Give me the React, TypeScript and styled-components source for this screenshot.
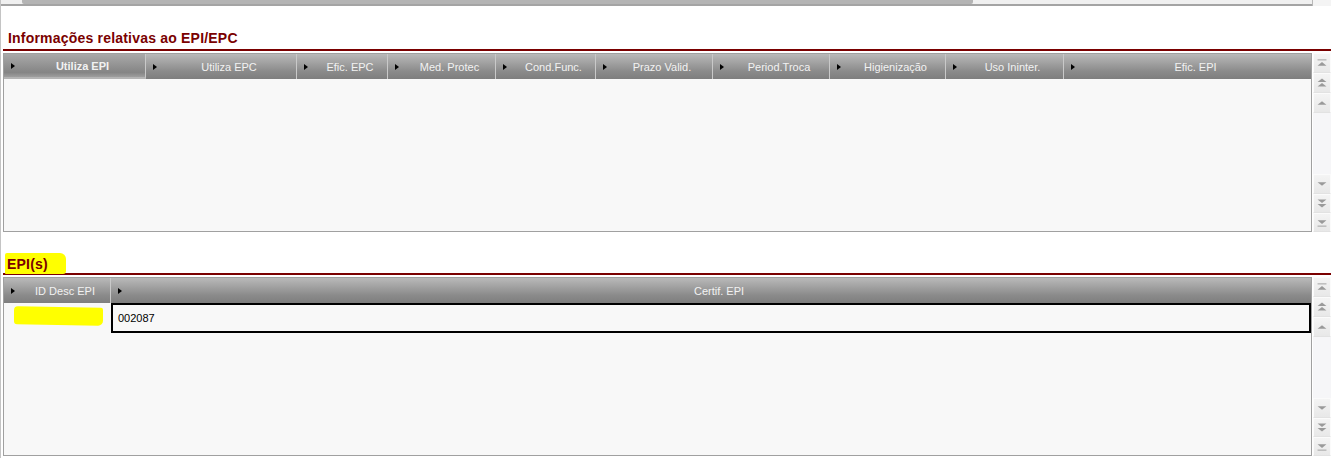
import React from 'react';
import styled, { createGlobalStyle } from 'styled-components';

const GlobalStyle = createGlobalStyle`
  html, body {
    margin: 0;
    padding: 0;
    background: #ffffff;
  }
  body {
    font-family: "Liberation Sans", Arial, sans-serif;
  }
`;

// Styled Components

const Page = styled.div`
  width: 1331px;
  height: 458px;
  box-sizing: border-box;
  border-left: 1px solid #c4c4c4;
  overflow: hidden;
`;

const TopScroll = styled.div`
  display: flex;
  height: 6px;
`;

const TopTrack = styled.div`
  flex: 1;
  display: flex;
  align-items: flex-start;
  background: #f0f0f0;
  border-bottom: 2px solid #a4a4a4;
  padding-left: 21px;
`;

const TopThumb = styled.div`
  width: 951px;
  height: 4px;
  background: #b4b4b4;
  border-radius: 0 0 2px 2px;
`;

const TopCorner = styled.div`
  width: 18px;
  border-left: 1px solid #b8b8b8;
  background: #f4f4f4;
`;

const Section = styled.section<{ $top: number }>`
  margin-top: ${(p) => p.$top}px;
  padding-left: 2px;
`;

const Title = styled.h2`
  margin: 0 0 0 5px;
  font-size: 14px;
  line-height: 16px;
  letter-spacing: 0.2px;
  font-weight: bold;
  color: #7a0000;
  display: flex;
`;

const Marker = styled.span`
  background: #ffff00;
  padding: 3px 18px 2px 2px;
  margin: -3px 0 -2px -3px;
  border-radius: 2px 6px 3px 1px;
`;

const Rule = styled.div<{ $gap: number }>`
  margin-top: ${(p) => p.$gap}px;
  height: 2px;
  background: #7a0000;
`;

const GridFrame = styled.div<{ $height: number; $gap: number }>`
  display: flex;
  margin-top: ${(p) => p.$gap}px;
  height: ${(p) => p.$height}px;
`;

const Table = styled.div`
  flex: 1;
  display: flex;
  flex-direction: column;
  border: 1px solid #a0a0a0;
  background: #f8f8f8;
`;

const HeaderRow = styled.div`
  display: flex;
  height: 25px;
  background: linear-gradient(#b9b9b9, #8a8a8a 70%, #7e7e7e);
`;

const HeaderCell = styled.div<{ $w?: number; $active?: boolean }>`
  ${(p) => (p.$w ? `width: ${p.$w}px;` : 'flex: 1;')}
  flex-shrink: 0;
  display: flex;
  align-items: center;
  box-sizing: border-box;
  border-right: 1px solid #c9c9c9;
  color: #f2f2f2;
  font-size: 11px;
  font-weight: ${(p) => (p.$active ? 'bold' : 'normal')};
  ${(p) =>
    p.$active
      ? 'background: linear-gradient(#a9a9a9, #858585 80%, #9e9e9e); border-bottom: 2px solid #b4b4b4;'
      : ''}

  &:last-child {
    border-right: none;
  }
`;

const Pointer = styled.span`
  width: 15px;
  flex-shrink: 0;
  display: flex;
  justify-content: center;
  padding-left: 1px;

  &::before {
    content: '';
    border-left: 4px solid #000;
    border-top: 3px solid transparent;
    border-bottom: 3px solid transparent;
  }
`;

const HeaderText = styled.span`
  flex: 1;
  text-align: center;
  white-space: nowrap;
`;

const Body = styled.div`
  flex: 1;
  display: flex;
  flex-direction: column;
`;

const DataRow = styled.div`
  display: flex;
  height: 30px;
`;

const IdCell = styled.div`
  width: 107px;
  box-sizing: border-box;
  padding: 4px 8px 6px 10px;
`;

const IdMarker = styled.div`
  height: 18px;
  background: #ffff00;
  border-radius: 4px 2px 5px 3px;
  transform: skewY(1deg);
`;

const EditCell = styled.div`
  flex: 1;
  border: 2px solid #000;
  display: flex;
  align-items: center;
  padding-left: 5px;
  font-size: 11px;
  color: #000;
`;

const VScroll = styled.div`
  width: 18px;
  margin-left: 1px;
  display: flex;
  flex-direction: column;
  background: #f6f6f6;
`;

const ScrollTrack = styled.div`
  flex: 1;
  background: #f6f6f8;
`;

const ScrollBtn = styled.div<{ $h: number }>`
  height: ${(p) => p.$h}px;
  display: flex;
  align-items: center;
  justify-content: center;
  box-sizing: border-box;
  border: 1px solid #fbfbfb;
  border-bottom-color: #e2e2e2;
  background: linear-gradient(#f4f4f4, #e8e8e8);
`;

type Arrow = 'first' | 'pageUp' | 'up' | 'down' | 'pageDown' | 'last';

function ArrowIcon({ kind }: { kind: Arrow }) {
  const c = '#9a9a9a';
  const up = (y: number) => `M4 ${y + 4} L9 ${y} L14 ${y + 4} Z`;
  const down = (y: number) => `M4 ${y} L9 ${y + 4} L14 ${y} Z`;
  return (
    <svg width="18" height="12" viewBox="0 0 18 12">
      {kind === 'first' && (
        <>
          <rect x="4" y="2" width="10" height="1" fill={c} />
          <path d={up(5)} fill={c} />
        </>
      )}
      {kind === 'pageUp' && (
        <>
          <path d={up(1)} fill={c} />
          <path d={up(6)} fill={c} />
        </>
      )}
      {kind === 'up' && <path d={up(4)} fill={c} />}
      {kind === 'down' && <path d={down(4)} fill={c} />}
      {kind === 'pageDown' && (
        <>
          <path d={down(1)} fill={c} />
          <path d={down(6)} fill={c} />
        </>
      )}
      {kind === 'last' && (
        <>
          <path d={down(3)} fill={c} />
          <rect x="4" y="9" width="10" height="1" fill={c} />
        </>
      )}
    </svg>
  );
}

function ScrollBar() {
  return (
    <VScroll>
      <ScrollBtn $h={20}><ArrowIcon kind="first" /></ScrollBtn>
      <ScrollBtn $h={20}><ArrowIcon kind="pageUp" /></ScrollBtn>
      <ScrollBtn $h={20}><ArrowIcon kind="up" /></ScrollBtn>
      <ScrollTrack />
      <ScrollBtn $h={20}><ArrowIcon kind="down" /></ScrollBtn>
      <ScrollBtn $h={19}><ArrowIcon kind="pageDown" /></ScrollBtn>
      <ScrollBtn $h={19}><ArrowIcon kind="last" /></ScrollBtn>
    </VScroll>
  );
}

const epcColumns = [
  { label: 'Utiliza EPI', w: 142, active: true },
  { label: 'Utiliza EPC', w: 151 },
  { label: 'Efic. EPC', w: 91 },
  { label: 'Med. Protec', w: 108 },
  { label: 'Cond.Func.', w: 100 },
  { label: 'Prazo Valid.', w: 117 },
  { label: 'Period.Troca', w: 117 },
  { label: 'Higienização', w: 116 },
  { label: 'Uso Ininter.', w: 118 },
  { label: 'Efic. EPI' },
];

export default function App() {
  return (
    <Page>
      <GlobalStyle />
      <TopScroll>
        <TopTrack>
          <TopThumb />
        </TopTrack>
        <TopCorner />
      </TopScroll>

      <Section $top={24}>
        <Title>Informações relativas ao EPI/EPC</Title>
        <Rule $gap={3} />
        <GridFrame $height={179} $gap={2}>
          <Table>
            <HeaderRow>
              {epcColumns.map((col) => (
                <HeaderCell key={col.label} $w={col.w} $active={col.active}>
                  <Pointer />
                  <HeaderText>{col.label}</HeaderText>
                </HeaderCell>
              ))}
            </HeaderRow>
            <Body />
          </Table>
          <ScrollBar />
        </GridFrame>
      </Section>

      <Section $top={24}>
        <Title>
          <Marker>EPI(s)</Marker>
        </Title>
        <Rule $gap={1} />
        <GridFrame $height={179} $gap={2}>
          <Table>
            <HeaderRow>
              <HeaderCell $w={107}>
                <Pointer />
                <HeaderText>ID Desc EPI</HeaderText>
              </HeaderCell>
              <HeaderCell>
                <Pointer />
                <HeaderText>Certif. EPI</HeaderText>
              </HeaderCell>
            </HeaderRow>
            <Body>
              <DataRow>
                <IdCell>
                  <IdMarker />
                </IdCell>
                <EditCell>002087</EditCell>
              </DataRow>
            </Body>
          </Table>
          <ScrollBar />
        </GridFrame>
      </Section>
    </Page>
  );
}
